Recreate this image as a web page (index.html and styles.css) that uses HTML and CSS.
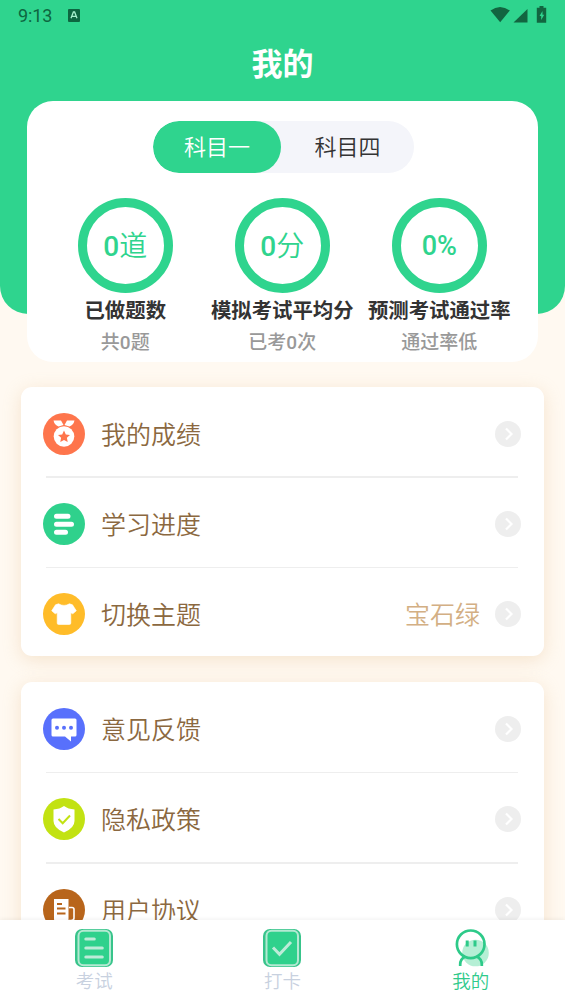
FILE: index.html
```html
<!DOCTYPE html>
<html lang="zh-CN">
<head>
<meta charset="utf-8">
<title>我的</title>
<link rel="stylesheet" href="styles.css">
</head>
<body>
<div class="screen">
  <header class="hero">
    <div class="status">
      <span class="clock">9:13</span>
      <svg class="status-app" width="12" height="13" viewBox="0 0 12 13"><rect width="12" height="13" rx="1" fill="#0d6640"/><path d="M3 9.3 5.4 3h1.2L9 9.3M4 7.3h4" fill="none" stroke="#a6f0cd" stroke-width="1.3"/></svg>
      <svg class="status-icons" width="58" height="18" viewBox="0 0 58 18"><g fill="#126540"><path d="M.5 4.5Q10 -2.5 19.800 4.500L10.200 16.200z"/><path d="M37.500 3v13.500H23.500z"/><path d="M49.500 0h4v1.800h2.700V16.800h-9.400V1.800h2.700z"/></g><path d="m52.500 5-3 5h1.700v4l3-5.200h-1.700z" fill="#2fd48e"/></svg>
    </div>
    <h1 class="title">我的</h1>
    <section class="summary">
      <div class="tabs"><span class="tab tab-active">科目一</span><span class="tab">科目四</span></div>
      <div class="stats">
        <div class="stat"><div class="ring"><b>0</b>道</div><div class="stat-name">已做题数</div><div class="stat-note">共0题</div></div>
        <div class="stat"><div class="ring"><b>0</b>分</div><div class="stat-name">模拟考试平均分</div><div class="stat-note">已考0次</div></div>
        <div class="stat"><div class="ring ring-percent"><b>0%</b></div><div class="stat-name">预测考试通过率</div><div class="stat-note">通过率低</div></div>
      </div>
    </section>
  </header>

  <main class="menus">
    <section class="menu">
      <div class="row">
        <svg class="icon" viewBox="0 0 42 42"><circle cx="21" cy="21" r="21" fill="#fe754c"/><path d="M10.500 7.500h7.500l2.500 4.500-5 1.500q-4-1.500-5-6zM31.500 7.500H24L21.500 12l5 1.500q4-1.500 5-6z" fill="#fff"/><circle cx="21" cy="23.500" r="10.300" fill="#fff"/><path d="m21 17.500 1.800 3.900 4.200.5-3.100 2.900.8 4.200-3.700-2.100-3.700 2.100.8-4.200-3.100-2.900 4.200-.5z" fill="#fe754c"/></svg>
        <span class="label">我的成绩</span>
        <svg class="arrow" viewBox="0 0 26 26"><circle cx="13" cy="13" r="13"/><path d="m11 7.500 5.500 5.500-5.500 5.500"/></svg>
      </div>
      <div class="row">
        <svg class="icon" viewBox="0 0 42 42"><circle cx="21" cy="21" r="21" fill="#2fd18c"/><path d="M13.500 13.200h11.500M13.500 21.200h15M13.500 29.200h9" fill="none" stroke="#fff" stroke-width="5" stroke-linecap="round"/></svg>
        <span class="label">学习进度</span>
        <svg class="arrow" viewBox="0 0 26 26"><circle cx="13" cy="13" r="13"/><path d="m11 7.500 5.500 5.500-5.500 5.500"/></svg>
      </div>
      <div class="row">
        <svg class="icon" viewBox="0 0 42 42"><circle cx="21" cy="21" r="21" fill="#ffbc29"/><path d="M15.500 10.800q5.500 3.200 11 0l3 1 3.800 6-3.500 3-2-1V30q0 1.500-1.500 1.500H15.700q-1.500 0-1.500-1.500V19.800l-2 1-3.500-3 3.800-6z" fill="#fff" stroke="#fff" stroke-width=".6" stroke-linejoin="round"/></svg>
        <span class="label">切换主题</span>
        <span class="value">宝石绿</span>
        <svg class="arrow" viewBox="0 0 26 26"><circle cx="13" cy="13" r="13"/><path d="m11 7.500 5.500 5.500-5.500 5.500"/></svg>
      </div>
    </section>

    <section class="menu">
      <div class="row">
        <svg class="icon" viewBox="0 0 42 42"><circle cx="21" cy="21" r="21" fill="#5870fc"/><path d="M10 10.500h22q1.500 0 1.500 1.500v15q0 1.500-1.500 1.500h-4v5l-6-5H10Q8.500 28.500 8.500 27V12q0-1.500 1.500-1.500z" fill="#fff"/><g fill="#5870fc"><circle cx="14" cy="19.700" r="2"/><circle cx="21" cy="19.700" r="2"/><circle cx="28" cy="19.700" r="2"/></g></svg>
        <span class="label">意见反馈</span>
        <svg class="arrow" viewBox="0 0 26 26"><circle cx="13" cy="13" r="13"/><path d="m11 7.500 5.500 5.500-5.500 5.500"/></svg>
      </div>
      <div class="row">
        <svg class="icon" viewBox="0 0 42 42"><circle cx="21" cy="21" r="21" fill="#c2e212"/><path d="M21 8q4 3 10.500 3.500V23q0 7-10.500 11.500Q10.500 30 10.500 23V11.500Q17 11 21 8z" fill="#fff"/><path d="m15.500 21 4.200 4.200 7.300-7.700" fill="none" stroke="#c2e212" stroke-width="2"/></svg>
        <span class="label">隐私政策</span>
        <svg class="arrow" viewBox="0 0 26 26"><circle cx="13" cy="13" r="13"/><path d="m11 7.500 5.500 5.500-5.500 5.500"/></svg>
      </div>
      <div class="row">
        <svg class="icon" viewBox="0 0 42 42"><circle cx="21" cy="21" r="21" fill="#b8651b"/><path d="M11 10h14.500v22H13q-2 0-2-2z" fill="#fff"/><path d="M26 18.500h3q2 0 2 2V29q0 2.500-3 2.500h-2" fill="none" stroke="#fff" stroke-width="1.600"/><path d="M14 15h5M14 19.500h8.500M14 24.500h8.500" stroke="#b8651b" stroke-width="1.800"/></svg>
        <span class="label">用户协议</span>
        <svg class="arrow" viewBox="0 0 26 26"><circle cx="13" cy="13" r="13"/><path d="m11 7.500 5.500 5.500-5.500 5.500"/></svg>
      </div>
    </section>
  </main>

  <nav class="tabbar">
    <div class="nav-item">
      <svg class="nav-icon" viewBox="0 0 38 38"><rect width="38" height="38" rx="7" fill="#38c48b"/><rect x="3.500" y="1.700" width="31.500" height="34.500" rx="5" fill="#2fd18c" stroke="#b4e9d2" stroke-width="2"/><path d="M10.800 10h8.500M10.800 19h16.500M10.800 28h16.500" stroke="#bdebd8" stroke-width="3" stroke-linecap="round"/></svg>
      <span>考试</span>
    </div>
    <div class="nav-item">
      <svg class="nav-icon" viewBox="0 0 38 38"><rect width="38" height="38" rx="7" fill="#38c48b"/><rect x="3.500" y="1.700" width="31.500" height="34.500" rx="5" fill="#2fd18c" stroke="#b4e9d2" stroke-width="2"/><path d="m10 18.500 6.500 6.800L28 13" fill="none" stroke="#bdebd8" stroke-width="3"/></svg>
      <span>打卡</span>
    </div>
    <div class="nav-item nav-active">
      <svg class="nav-icon" viewBox="0 0 38 38"><circle cx="23.500" cy="24" r="13.300" fill="#b5efd5"/><g fill="none" stroke="#2dca89" stroke-width="2.700"><circle cx="18.700" cy="15.300" r="13.800"/><path d="M8.200 37v-1.500q0-5.500 5-8M29.800 37v-1.500q0-5.500-5-8"/></g><path d="M15.200 11.500v6M23 11.500v6" stroke="#2dca89" stroke-width="3"/></svg>
      <span>我的</span>
    </div>
  </nav>
</div>
</body>
</html>
```
FILE: styles.css
```css
* { box-sizing: border-box; }
body { margin: 0; font-family: Roboto, "Noto Sans CJK SC", sans-serif; }
.screen { width: 565px; height: 1004px; overflow: hidden; display: flex; flex-direction: column; background: #fff9f1; }

.hero { flex: none; height: 314px; padding: 0 27px; background: #2fd48e; border-radius: 0 0 28px 28px; }
.status { display: flex; align-items: center; height: 32px; margin: 0 -9px; color: #0d6640; }
.clock { margin-top: -1px; font-size: 18px; letter-spacing: -.1px; }
.status-app { margin-left: 16px; margin-top: -2px; }
.status-icons { margin-left: auto; margin-right: -1px; margin-bottom: 2px; }
.title { margin: 0; height: 69px; line-height: 65px; text-align: center; color: #fff; font-size: 31px; font-weight: 700; }

.summary { width: 511.500px; height: 260.500px; margin-left: -.5px; padding-top: 20px; background: #fff; border-radius: 26px; }
.tabs { display: flex; width: 261px; height: 52px; margin: 0 auto; background: #f4f5fa; border-radius: 26px; overflow: hidden; position: relative; left: 1.500px; }
.tab { width: 133.500px; line-height: 53px; text-align: center; font-size: 22px; font-weight: 350; color: #333; }
.tab-active { width: 127.500px; color: #fff; background: #2fd48e; border-radius: 26px; }
.stats { display: grid; grid-template-columns: repeat(3, 157px); justify-content: center; margin-top: 25px; }
.stat { display: flex; flex-direction: column; align-items: center; white-space: nowrap; }
.ring { display: flex; align-items: center; justify-content: center; width: 95px; height: 95px; padding-top: 3px; border: 9.500px solid #2fd48e; border-radius: 50%; color: #2fd48e; font-size: 28px; font-weight: 350; line-height: 40px; }
.ring b { font-weight: 500; }
.ring-percent { padding-top: 0; font-size: 27px; }
.stat-name { height: 35px; line-height: 36px; font-size: 20.400px; font-weight: 700; color: #333; }
.stat-note { height: 28px; line-height: 30px; font-size: 19px; font-weight: 500; color: #999; }

.menus { flex: 1; min-height: 0; overflow: hidden; display: flex; flex-direction: column; gap: 26px; padding: 73px 21px 0; }
.menu { flex: none; width: 523px; padding: 1px 0 0; background: #fff; border-radius: 11px; box-shadow: 0 4px 18px rgba(225, 185, 130, .32); }
.row { display: flex; align-items: center; height: 90.300px; padding: 1px 23px 0 22px; position: relative; }
.row:last-child { height: 87.900px; padding-top: 3px; }
.row + .row::before { content: ""; position: absolute; top: -2px; left: 25px; right: 26px; height: 1.500px; background: #eee; }
.icon { width: 42px; height: 42px; }
.label { margin-left: 16px; margin-top: 4px; font-size: 25px; line-height: 38px; font-weight: 350; color: #8b6840; }
.value { margin-left: auto; margin-top: 4px; font-size: 25px; line-height: 38px; font-weight: 350; color: #d3af84; }
.arrow { width: 26px; height: 26px; margin-left: auto; }
.value + .arrow { margin-left: 15px; }
.arrow circle { fill: #eee; }
.arrow path { fill: none; stroke: #fff; stroke-width: 2.200; }

.tabbar { flex: none; display: grid; grid-template-columns: repeat(3, 1fr); height: 84px; padding-top: 9px; background: #fff; box-shadow: 0 -1px 4px rgba(0, 0, 0, .06); position: relative; }
.nav-item { display: flex; flex-direction: column; align-items: center; font-size: 18.500px; font-weight: 350; line-height: 31px; color: #c8d1df; }
.nav-icon { width: 38px; height: 38px; }
.nav-active { color: #2fca8b; }
```
